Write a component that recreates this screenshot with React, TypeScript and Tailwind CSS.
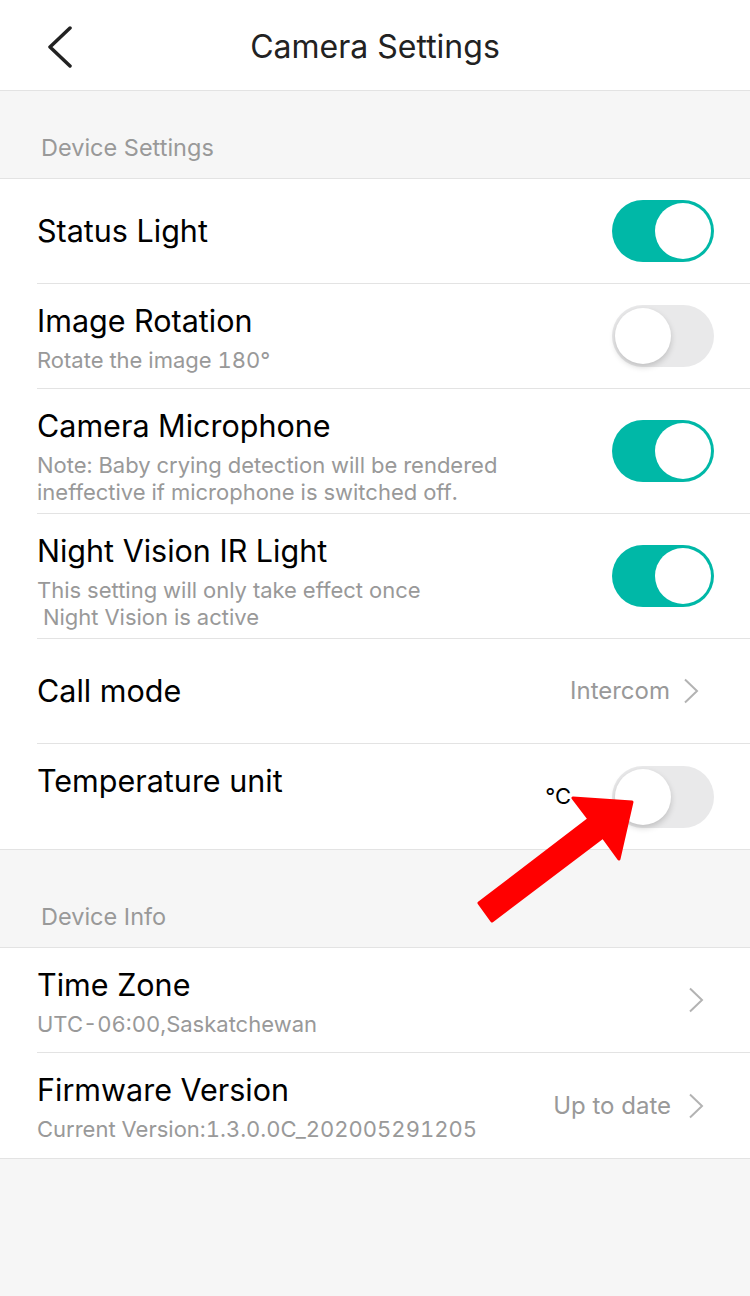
import React from "react";

const font = { fontFamily: "Inter, 'Liberation Sans', sans-serif" };

function Toggle({ on }: { on: boolean }) {
  return on ? (
    <div className="w-[102px] h-[62px] rounded-full bg-[#00b8a7] flex items-center justify-end pr-[3px] shrink-0">
      <div className="w-[56px] h-[56px] rounded-full bg-white" />
    </div>
  ) : (
    <div className="w-[102px] h-[62px] rounded-full bg-[#e9e9ea] flex items-center justify-start pl-[3px] shrink-0">
      <div className="w-[56px] h-[56px] rounded-full bg-white shadow-[0_3px_6px_rgba(0,0,0,0.18)]" />
    </div>
  );
}

function Chevron() {
  return (
    <svg width="16" height="26" viewBox="0 0 16 26" className="shrink-0">
      <path d="M2 1.5 L14 13 L2 24.5" fill="none" stroke="#b3b3b3" strokeWidth="2" />
    </svg>
  );
}

function Row({
  title,
  subs,
  right,
  last,
  top,
}: {
  title: string;
  subs?: string[];
  right: React.ReactNode;
  last?: boolean;
  top?: boolean;
}) {
  const hasSubs = !!subs && subs.length > 0;
  return (
    <div className="pl-[37px]">
      <div
        className={`min-h-[105px] flex items-center justify-between pr-[36px] ${
          last ? "" : "border-b border-[#e3e3e3]"
        }`}
      >
        <div
          className={`flex flex-col ${hasSubs ? "pt-[19px] pb-[7px] self-start" : top ? "self-start pt-[19px]" : ""}`}
        >
          <div className="text-[30.5px] leading-[36px] text-black">{title}</div>
          {hasSubs && (
            <div className="mt-[8px]">
              {subs!.map((s, i) => (
                <div key={i} className="text-[22px] leading-[27px] text-[#999] whitespace-pre tabular-nums">
                  {s}
                </div>
              ))}
            </div>
          )}
        </div>
        {right}
      </div>
    </div>
  );
}

export default function App() {
  return (
    <div className="w-[750px] h-[1296px] bg-[#f6f6f6] relative overflow-hidden" style={font}>
      <div className="h-[91px] bg-white border-b border-[#e3e3e3] relative flex items-center justify-center">
        <svg width="30" height="42" viewBox="0 0 30 42" className="absolute left-[45px] top-[26px]">
          <path d="M25 2 L5 21 L25 40" fill="none" stroke="#222" strokeWidth="3.5" strokeLinecap="round" strokeLinejoin="round" />
        </svg>
        <div className="text-[32px] text-[#222] mt-[3px]">Camera Settings</div>
      </div>

      <div className="h-[88px] flex items-end pb-[13px] pl-[41px] text-[23.5px] text-[#999] border-b border-[#e3e3e3]">
        Device Settings
      </div>

      <div className="bg-white border-b border-[#e3e3e3]">
        <Row title="Status Light" right={<Toggle on />} />
        <Row title="Image Rotation" subs={["Rotate the image 180°"]} right={<Toggle on={false} />} />
        <Row
          title="Camera Microphone"
          subs={["Note: Baby crying detection will be rendered", "ineffective if microphone is switched off."]}
          right={<Toggle on />}
        />
        <Row
          title="Night Vision IR Light"
          subs={["This setting will only take effect once", " Night Vision is active"]}
          right={<Toggle on />}
        />
        <Row
          title="Call mode"
          right={
            <div className="flex items-center gap-[13px] pr-[15px]">
              <span className="text-[24px] text-[#999]">Intercom</span>
              <Chevron />
            </div>
          }
        />
        <Row
          title="Temperature unit"
          last
          top
          right={
            <div className="flex items-center">
              <span className="text-[22px] text-black mr-[41px]">°C</span>
              <Toggle on={false} />
            </div>
          }
        />
      </div>

      <div className="h-[98px] flex items-end pb-[13px] pl-[41px] text-[23.5px] text-[#999] border-b border-[#e3e3e3]">
        Device Info
      </div>

      <div className="bg-white border-b border-[#e3e3e3]">
        <Row
          title="Time Zone"
          subs={["UTC-06:00,Saskatchewan"]}
          right={<div className="pr-[10px]"><Chevron /></div>}
        />
        <Row
          title="Firmware Version"
          subs={["Current Version:1.3.0.0C_202005291205"]}
          last
          right={
            <div className="flex items-center gap-[17px] pr-[10px]">
              <span className="text-[24px] text-[#999]">Up to date</span>
              <Chevron />
            </div>
          }
        />
      </div>

      <svg className="absolute left-0 top-0 pointer-events-none" width="750" height="1296">
        <polygon
          points="479,903 589,819 573,798 632,802 619,859 603,837 492,921"
          fill="#ff0000"
          stroke="#ff0000"
          strokeWidth="3"
          strokeLinejoin="round"
        />
      </svg>
    </div>
  );
}
